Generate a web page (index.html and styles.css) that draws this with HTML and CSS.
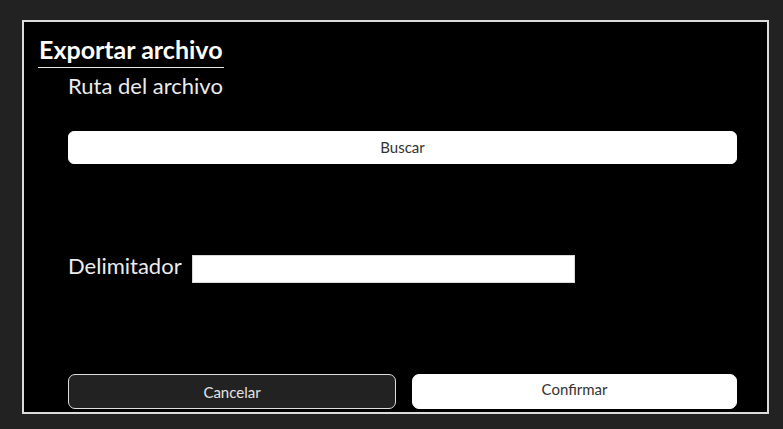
FILE: index.html
```html
<!DOCTYPE html>
<html lang="es">
<head>
<meta charset="utf-8">
<title>Exportar archivo</title>
<link rel="stylesheet" href="styles.css">
</head>
<body>
<div class="dialog">
  <div class="title-wrap"><h1 class="title">Exportar archivo</h1></div>
  <div class="section">
    <div class="label">Ruta del archivo</div>
    <button class="btn btn-light btn-browse" type="button">Buscar</button>
  </div>
  <div class="row">
    <label class="label" for="delim">Delimitador</label>
    <input class="input" id="delim" type="text">
  </div>
  <div class="footer">
    <button class="btn btn-dark" type="button">Cancelar</button>
    <button class="btn btn-light btn-confirm" type="button">Confirmar</button>
  </div>
</div>
</body>
</html>
```
FILE: styles.css
```css
html, body {
  margin: 0;
  padding: 0;
  background: #222222;
  font-family: Lato, "Open Sans", "Liberation Sans", sans-serif;
}
body {
  width: 783px;
  height: 429px;
  overflow: hidden;
}
.dialog {
  box-sizing: border-box;
  margin: 20px 0 0 22px;
  width: 747px;
  height: 394px;
  background: #000;
  border: 2px solid #dcdcdc;
  padding: 12px 30px 3px 15px;
  display: flex;
  flex-direction: column;
}
.title-wrap {
  display: flex;
}
.title {
  margin: 0 0 0 -1px;
  font-size: 25px;
  font-weight: 700;
  line-height: 30px;
  color: #fff;
  padding: 0 1px 3px 1px;
  border-bottom: 1px solid #e8e8e8;
}
.section {
  margin-left: 29px;
  display: flex;
  flex-direction: column;
}
.label {
  font-size: 22px;
  line-height: 26px;
  color: #ececec;
}
.section .label {
  margin-top: 5px;
}
.btn {
  font-family: inherit;
  font-size: 15px;
  line-height: 18px;
  cursor: pointer;
  box-sizing: border-box;
}
.btn-light {
  background: #fff;
  color: #333;
  border: 1px solid #fff;
}
.btn-browse {
  margin-top: 32px;
  height: 33px;
  border-radius: 6px;
  padding: 0 0 2px 0;
}
.row {
  margin: 89px 0 0 29px;
  display: flex;
  align-items: flex-start;
  gap: 10px;
}
.input {
  box-sizing: border-box;
  width: 383px;
  height: 28px;
  margin: 2px 0 0 0;
  border: 1px solid #d8d8d8;
  background: #fff;
  padding: 0 4px;
  font-family: inherit;
  font-size: 14px;
  outline: none;
}
.footer {
  margin: auto 0 0 29px;
  display: grid;
  grid-template-columns: 328px 325px;
  column-gap: 16px;
}
.footer .btn {
  height: 35px;
  border-radius: 7px;
}
.btn-dark {
  background: #222;
  color: #e4e4e4;
  border: 1.5px solid #dedede;
  padding: 0;
}
.btn-confirm {
  padding: 0 0 5px 0;
}
```
